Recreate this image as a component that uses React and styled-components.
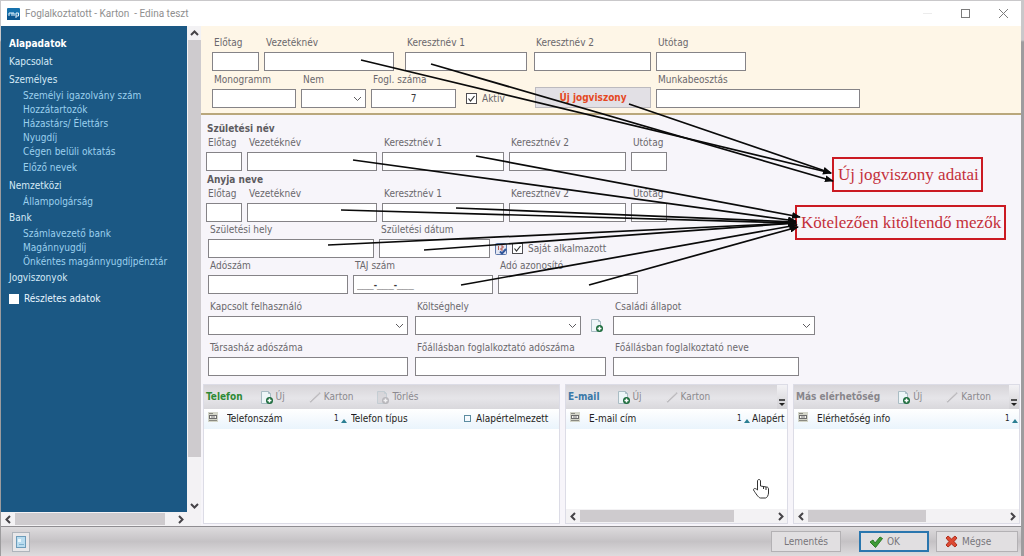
import React, { useId } from 'react'
import styled, { createGlobalStyle, css } from 'styled-components'

const GlobalStyle = createGlobalStyle`
    * {
        box-sizing: border-box;
    }
    body {
        margin: 0;
        font-family: 'DejaVu Sans Condensed', 'Noto Sans', sans-serif;
        font-size: 10px;
        line-height: 14px;
        color: #6a686c;
    }
    button, input, select {
        font: inherit;
        color: inherit;
        margin: 0;
    }
`

const Desktop = styled.div`
    position: relative;
    min-height: 100vh;
    display: flex;
    padding: 1px 3px 0 1px;
    background: linear-gradient(#c9c8ca 0, #c9c8ca 40px, #9d9c9e 42px, #9d9c9e 100%);
`
const Window = styled.div`
    flex: 1;
    min-width: 0;
    display: flex;
    flex-direction: column;
    background: #f7f5fa;
`

/* title bar */
const TitleBar = styled.header`
    display: flex;
    align-items: center;
    height: 25px;
    padding: 0 5px 0 6px;
    gap: 5px;
    background: #fff;
`
const Title = styled.h1`
    flex: 1;
    margin: 0;
    font-family: Roboto, 'Open Sans', sans-serif;
    font-size: 10px;
    font-weight: 400;
    color: #8f8f8f;
    white-space: pre;
`
const WindowButton = styled.button`
    width: 26px;
    height: 24px;
    margin-left: 7px;
    padding: 0;
    border: none;
    background: none;
    color: ${({ $faded }) => ($faded ? '#ececec' : '#7c7c7c')};
    svg {
        display: block;
        margin: auto;
    }
`

const Content = styled.div`
    flex: 1;
    display: flex;
    min-height: 0;
`

/* side navigation */
const Side = styled.aside`
    display: grid;
    grid-template-columns: 186px 14px;
    grid-template-rows: 1fr 14px;
    background: #f3f2f4;
`
const Nav = styled.nav`
    padding: 9px 8px 0;
    background: #1b5884;
    color: #d6ecfa;
    ul {
        list-style: none;
        margin: 0;
        padding: 0;
    }
    ul ul {
        padding-left: 14px;
    }
`
const NavLink = styled.a`
    display: block;
    line-height: 18px;
    color: ${({ $active }) => ($active ? '#fff' : '#d6eaf7')};
    font-weight: ${({ $active }) => ($active ? 700 : 400)};
    text-decoration: none;
    white-space: nowrap;
`
const SubLink = styled(NavLink)`
    line-height: 14px;
    padding: ${({ $apart }) => ($apart ? '2px 0' : 0)};
    color: #9bd0ee;
`
const DetailToggle = styled.label`
    display: flex;
    align-items: center;
    gap: 5px;
    margin-top: 5px;
    color: #e9f6ff;
    input {
        appearance: none;
        width: 10px;
        height: 10px;
        background: #fff;
    }
`

/* scroll bars */
const Bar = styled.div`
    display: flex;
    flex-direction: ${({ $vertical }) => ($vertical ? 'column' : 'row')};
    align-items: stretch;
    ${({ $vertical }) => ($vertical ? 'width: 14px; padding-left: 1px;' : 'height: 14px; padding: 1px 0;')}
    background: #f3f2f4;
`
const BarButton = styled.button`
    flex: 0 0 14px;
    display: flex;
    align-items: center;
    justify-content: center;
    padding: 0;
    border: none;
    background: none;
    color: #454347;
`
const BarTrack = styled.div`
    flex: 1;
    display: flex;
    flex-direction: ${({ $vertical }) => ($vertical ? 'column' : 'row')};
    &::before {
        content: '';
        flex: 0 0 ${({ $thumb }) => $thumb}%;
        background: #cecbce;
    }
`

/* form */
const Main = styled.main`
    flex: 1;
    min-width: 0;
    display: flex;
    flex-direction: column;
`
const TopForm = styled.section`
    display: flex;
    flex-direction: column;
    gap: 2px;
    padding: 10px 11px 5px;
    background: #fef6e7;
    border-bottom: 2px solid #b9a77c;
`
const Form = styled.section`
    display: flex;
    flex-direction: column;
    gap: ${({ $gap }) => $gap || 1}px;
    padding: ${({ $pad }) => $pad};
`
const SectionTitle = styled.h2`
    margin: 1px 0 -1px 1px;
    font-size: 10px;
    line-height: 14px;
    font-weight: 700;
    color: #5d5b60;
`
const Row = styled.div`
    display: flex;
    align-items: flex-end;
    gap: ${({ $gap }) => $gap || 5}px;
`
const FieldBox = styled.div`
    display: flex;
    flex-direction: column;
    gap: 2px;
    width: ${({ $w }) => $w}px;
    margin-right: ${({ $after }) => $after || 0}px;
    label {
        padding-left: 2px;
        white-space: nowrap;
    }
`
const control = css`
    width: 100%;
    height: 19px;
    padding: 0 3px;
    border: 1px solid #858387;
    border-radius: 0;
    background: #fff;
    color: #3c3a3e;
    outline: none;
`
const TextInput = styled.input`
    ${control}
    text-align: ${({ $center }) => ($center ? 'center' : 'left')};
    ${({ $mask }) => $mask && "font-family: 'Liberation Sans', sans-serif; font-weight: 700;"}
`
const SelectWrap = styled.div`
    display: grid;
    align-items: center;
    > * {
        grid-area: 1 / 1;
    }
    svg {
        justify-self: end;
        margin-right: 4px;
        pointer-events: none;
        color: #5d5b5f;
    }
`
const SelectInput = styled.select`
    ${control}
    appearance: none;
`
const CheckLabel = styled.label`
    display: flex;
    align-items: center;
    gap: 5px;
    height: 19px;
    width: ${({ $w }) => $w}px;
    white-space: nowrap;
`
const CheckBox = styled.span`
    display: grid;
    > * {
        grid-area: 1 / 1;
    }
    input {
        appearance: none;
        width: 11px;
        height: 11px;
        border: 1px solid #4f4d51;
        background: #fff;
    }
    svg {
        display: none;
        pointer-events: none;
    }
    input:checked + svg {
        display: block;
    }
`
const NewRelation = styled.button`
    width: 116px;
    height: 21px;
    border: 1px solid #bcbabf;
    background: #e2e0e5;
    color: #e5481f;
    font-weight: 700;
    padding: 0;
`
const IconButton = styled.button`
    display: flex;
    align-items: center;
    justify-content: center;
    width: ${({ $w }) => $w}px;
    height: 19px;
    padding: 0;
    border: none;
    background: none;
`

/* contact lists */
const Panels = styled.section`
    flex: 1;
    display: grid;
    grid-template-columns: 357fr 223fr 227fr;
    gap: 5px;
    margin-top: 8px;
    padding: 0 1px 2px 2px;
`
const Panel = styled.section`
    display: flex;
    flex-direction: column;
    min-width: 0;
    overflow: hidden;
    border: 1px solid #dcdce6;
    background: #fff;
`
const Toolbar = styled.div`
    position: relative;
    display: flex;
    align-items: center;
    height: 24px;
    padding-left: 2px;
    background: linear-gradient(#d7d5d9, #e6e5e9 55%, #d9d8dc);
`
const PanelTitle = styled.h3`
    margin: 0 17px 0 0;
    font-size: 10px;
    font-weight: 700;
    white-space: nowrap;
    color: ${({ $color }) => $color};
`
const ToolButton = styled.button`
    display: flex;
    align-items: center;
    gap: 2px;
    margin-right: 23px;
    padding: 0;
    border: none;
    background: none;
    color: #8b898e;
`
const More = styled.button`
    position: absolute;
    right: 0;
    bottom: 0;
    width: 10px;
    height: 24px;
    padding: 12px 0 0 2px;
    border: none;
    background: linear-gradient(#f3f2f5, #d2d1d5);
    color: #222;
    svg {
        display: block;
    }
`
const List = styled.table`
    width: 100%;
    table-layout: fixed;
    border-collapse: collapse;
    background: linear-gradient(#fff, #eaf4fc);
    color: #1f1e22;
    th {
        height: 20px;
        padding: 0;
        font-weight: 400;
        text-align: left;
        white-space: nowrap;
        overflow: hidden;
    }
`
const SortMark = styled.span`
    display: flex;
    align-items: center;
    gap: 2px;
    font-size: 8px;
    line-height: 12px;
    svg {
        margin-top: 3px;
    }
`
const BoxMark = styled.span`
    display: inline-block;
    width: 7px;
    height: 7px;
    margin-right: 5px;
    border: 1px solid #5c8ca0;
`
const PanelBody = styled.div`
    flex: 1;
`

/* bottom bar */
const Footer = styled.footer`
    display: flex;
    align-items: center;
    gap: 7px;
    height: 30px;
    padding: 0 3px 0 11px;
    border-top: 1px solid #8f8d91;
    background: linear-gradient(#dddbdd, #c5c2c5 50%, #dedcde);
`
const FooterButton = styled.button`
    display: flex;
    align-items: center;
    justify-content: ${({ $center }) => ($center ? 'center' : 'flex-start')};
    gap: 4px;
    width: ${({ $w }) => $w}px;
    height: 21px;
    padding: 0 8px;
    border: ${({ $primary }) => ($primary ? '2px solid #2a76ae' : '1px solid #b3b1b4')};
    background: #e1dfe1;
    color: #77757a;
`
const Spacer = styled.span`
    width: 4px;
`
const NoteButton = styled.button`
    display: flex;
    align-items: center;
    justify-content: center;
    width: 18px;
    height: 20px;
    margin-right: auto;
    padding: 0;
    border: 1px solid #aeb4bb;
    background: #e8e7e9;
`

/* annotations above the window */
const Overlay = styled.svg`
    position: absolute;
    left: 0;
    top: 0;
    pointer-events: none;
`
const Callout = styled.div`
    position: absolute;
    left: ${({ $x }) => $x}px;
    top: ${({ $y }) => $y}px;
    width: ${({ $w }) => $w}px;
    padding: 0 4px;
    border: 2px solid #cb1a22;
    font-family: 'Liberation Serif', serif;
    font-size: 17px;
    line-height: 31px;
    color: #c4303a;
    white-space: nowrap;
`

const Chevron = ({ dir = 'down', bold }) => {
    const points = {
        down: '1,3 4.5,6.5 8,3',
        up: '1,6 4.5,2.5 8,6',
        left: '6,1 2.5,4.5 6,8',
        right: '3,1 6.5,4.5 3,8',
    }
    return (
        <svg width="9" height="9" viewBox="0 0 9 9" fill="none" stroke="currentColor" strokeWidth={bold ? 2 : 1}>
            <polyline points={points[dir]} />
        </svg>
    )
}

const NewIcon = ({ faded }) => (
    <svg width="14" height="15" viewBox="0 0 14 15" opacity={faded ? 0.5 : 1}>
        <path d="M1.5 1.5h7l2 2v10h-9z" fill={faded ? '#cfced2' : '#eef6f8'} stroke="#a9bcc4" />
        <path d="M8.500 1.500v2h2" fill="none" stroke="#a9bcc4" />
        <circle cx="9.500" cy="10.500" r="3.500" fill={faded ? '#8d8c90' : '#1c6b3c'} />
        <path d="M9.500 8.500v4M7.500 10.500h4" stroke="#fff" strokeWidth="1.500" />
    </svg>
)

const PencilIcon = () => (
    <svg width="14" height="14" viewBox="0 0 14 14">
        <path d="M2 12L12 2.500" stroke="#bdbbbf" strokeWidth="2" />
        <path d="M1.500 11.500L11.500 2" stroke="#e9e8ea" strokeWidth="1" />
    </svg>
)

const CardIcon = () => (
    <svg width="10" height="10" viewBox="0 0 10 10">
        <rect x="0" y="0" width="10" height="10" fill="#d3d5c8" />
        <path d="M1 1.500h4M1 8.500h8" stroke="#8a8a82" />
        <rect x="1.500" y="3.500" width="7" height="3" fill="#f4f4ee" stroke="#6d6d6d" />
        <path d="M3 5h4" stroke="#777" />
    </svg>
)

const CalendarIcon = () => (
    <svg width="12" height="12" viewBox="0 0 12 12">
        <rect x="0.500" y="0.500" width="11" height="11" rx="1" fill="#e3e6f2" stroke="#5d77a9" />
        <path d="M3.500 3v4M6 3h2v2H6v2h2" fill="none" stroke="#b8574c" />
        <path d="M5 8.500l2 2 4-4.500" fill="none" stroke="#31569b" strokeWidth="2" />
    </svg>
)

const CheckMark = () => (
    <svg width="11" height="11" viewBox="0 0 11 11">
        <path d="M2.500 5.500l2 2.500 4-5" fill="none" stroke="#333" strokeWidth="1.200" />
    </svg>
)

const Check = ({ text, w }) => (
    <CheckLabel $w={w}>
        <CheckBox>
            <input type="checkbox" defaultChecked />
            <CheckMark />
        </CheckBox>
        {text}
    </CheckLabel>
)

const Field = ({ label, w, after, value, center, mask, select }) => {
    const id = useId()
    return (
        <FieldBox $w={w} $after={after}>
            <label htmlFor={id}>{label}</label>
            {select ? (
                <SelectWrap>
                    <SelectInput id={id} />
                    <Chevron />
                </SelectWrap>
            ) : (
                <TextInput id={id} defaultValue={value} $center={center} $mask={mask} />
            )}
        </FieldBox>
    )
}

const NameRow = () => (
    <Row>
        <Field label="Előtag" w={36} />
        <Field label="Vezetéknév" w={130} />
        <Field label="Keresztnév 1" w={122} />
        <Field label="Keresztnév 2" w={117} />
        <Field label="Utótag" w={36} />
    </Row>
)

const ScrollBar = ({ vertical, thumb }) => (
    <Bar $vertical={vertical}>
        <BarButton aria-label={vertical ? 'Fel' : 'Balra'}>
            <Chevron dir={vertical ? 'up' : 'left'} bold />
        </BarButton>
        <BarTrack $vertical={vertical} $thumb={thumb} />
        <BarButton aria-label={vertical ? 'Le' : 'Jobbra'}>
            <Chevron dir={vertical ? 'down' : 'right'} bold />
        </BarButton>
    </Bar>
)

const menu = [
    { text: 'Alapadatok', active: true },
    { text: 'Kapcsolat' },
    {
        text: 'Személyes',
        items: ['Személyi igazolvány szám', 'Hozzátartozók', 'Házastárs/ Élettárs', 'Nyugdíj', 'Cégen belüli oktatás', 'Előző nevek'],
    },
    { text: 'Nemzetközi', items: ['Állampolgárság'] },
    { text: 'Bank', items: ['Számlavezető bank', 'Magánnyugdíj', 'Önkéntes magánnyugdíjpénztár'] },
    { text: 'Jogviszonyok' },
]

const panels = [
    {
        title: 'Telefon',
        color: '#2f8a35',
        remove: true,
        columns: [
            { text: 'Telefonszám', w: 107 },
            { sort: true, w: 17 },
            { text: 'Telefon típus', w: 113 },
            { text: 'Alapértelmezett', box: true },
        ],
    },
    {
        title: 'E-mail',
        color: '#3a78a8',
        more: true,
        thumb: 80,
        columns: [
            { text: 'E-mail cím', w: 148 },
            { sort: true, w: 15 },
            { text: 'Alapért' },
        ],
    },
    {
        title: 'Más elérhetőség',
        color: '#88868b',
        more: true,
        thumb: 60,
        columns: [{ text: 'Elérhetőség info' }, { sort: true, w: 14 }],
    },
]

const arrows = [
    [361, 60, 831, 173],
    [431, 64, 833, 181],
    [629, 104, 831, 173],
    [353, 160, 796, 221],
    [476, 156, 800, 217],
    [341, 210, 796, 223],
    [456, 208, 796, 222],
    [328, 245, 796, 223],
    [424, 250, 796, 223],
    [461, 285, 797, 225],
    [589, 285, 798, 227],
]

const ContactPanel = ({ panel }) => (
    <Panel>
        <Toolbar>
            <PanelTitle $color={panel.color}>{panel.title}</PanelTitle>
            <ToolButton><NewIcon />Új</ToolButton>
            <ToolButton><PencilIcon />Karton</ToolButton>
            {panel.remove && <ToolButton><NewIcon faded />Törlés</ToolButton>}
            {panel.more && (
                <More aria-label="Továbbiak">
                    <svg width="6" height="8" viewBox="0 0 6 8">
                        <path d="M0 1h6" stroke="currentColor" strokeWidth="1.500" />
                        <path d="M0 4h6l-3 3z" fill="currentColor" />
                    </svg>
                </More>
            )}
        </Toolbar>
        <List>
            <colgroup>
                <col style={{ width: 23 }} />
                {panel.columns.map((col, i) => <col key={i} style={{ width: col.w }} />)}
            </colgroup>
            <thead>
                <tr>
                    <th style={{ paddingLeft: 4 }}><CardIcon /></th>
                    {panel.columns.map((col, i) => (
                        <th key={i}>
                            {col.sort && (
                                <SortMark>
                                    1
                                    <svg width="6" height="4" viewBox="0 0 6 4"><path d="M0 4l3-4 3 4z" fill="#2b7f93" /></svg>
                                </SortMark>
                            )}
                            {col.box && <BoxMark />}
                            {col.text}
                        </th>
                    ))}
                </tr>
            </thead>
        </List>
        <PanelBody />
        {panel.thumb && <ScrollBar thumb={panel.thumb} />}
    </Panel>
)

const Navigation = () => (
    <Side>
        <Nav>
            <ul>
                {menu.map((group) => (
                    <li key={group.text}>
                        <NavLink href="#" $active={group.active}>{group.text}</NavLink>
                        {group.items && (
                            <ul>
                                {group.items.map((item, i) => (
                                    <li key={item}><SubLink href="#" $apart={i === 5}>{item}</SubLink></li>
                                ))}
                            </ul>
                        )}
                    </li>
                ))}
            </ul>
            <DetailToggle>
                <input type="checkbox" />
                Részletes adatok
            </DetailToggle>
        </Nav>
        <ScrollBar vertical thumb={91} />
        <ScrollBar thumb={95} />
    </Side>
)

const App = () => {
    return (
        <Desktop>
            <GlobalStyle />
            <Window>
                <TitleBar>
                    <svg width="13" height="12" viewBox="0 0 13 12">
                        <rect width="13" height="12" rx="1" fill="#1671ac" />
                        <rect y="7" width="13" height="5" fill="#0d578f" />
                        <path d="M2 8V5M2 5h3v3M5 5h2v3M9 10V5h2.500v3H9" fill="none" stroke="#e6f4fc" />
                    </svg>
                    <Title>Foglalkoztatott - Karton  - Edina teszt</Title>
                    <WindowButton aria-label="Kis méret" $faded>
                        <svg width="9" height="9"><path d="M0 4.500h9" stroke="currentColor" /></svg>
                    </WindowButton>
                    <WindowButton aria-label="Teljes méret">
                        <svg width="9" height="9"><rect x="0.500" y="0.500" width="8" height="8" fill="none" stroke="currentColor" /></svg>
                    </WindowButton>
                    <WindowButton aria-label="Bezárás">
                        <svg width="9" height="9"><path d="M0 0l9 9M9 0L0 9" stroke="currentColor" /></svg>
                    </WindowButton>
                </TitleBar>

                <Content>
                    <Navigation />
                    <Main>
                        <TopForm>
                            <Row>
                                <Field label="Előtag" w={47} />
                                <Field label="Vezetéknév" w={130} after={6} />
                                <Field label="Keresztnév 1" w={122} after={2} />
                                <Field label="Keresztnév 2" w={117} />
                                <Field label="Utótag" w={90} />
                            </Row>
                            <Row>
                                <Field label="Monogramm" w={84} />
                                <Field label="Nem" w={65} select />
                                <Field label="Fogl. száma" w={85} value="7" center after={5} />
                                <Check text="Aktív" w={64} />
                                <NewRelation>Új jogviszony</NewRelation>
                                <Field label="Munkabeosztás" w={204} />
                            </Row>
                        </TopForm>

                        <Form $pad="6px 5px 0">
                            <SectionTitle>Születési név</SectionTitle>
                            <NameRow />
                            <SectionTitle>Anyja neve</SectionTitle>
                            <NameRow />
                        </Form>
                        <Form $pad="1px 7px 0">
                            <Row>
                                <Field label="Születési hely" w={166} />
                                <Field label="Születési dátum" w={111} />
                                <IconButton $w={12} aria-label="Naptár"><CalendarIcon /></IconButton>
                                <Check text="Saját alkalmazott" w={100} />
                            </Row>
                            <Row>
                                <Field label="Adószám" w={140} />
                                <Field label="TAJ szám" w={140} value="___-___-___" mask />
                                <Field label="Adó azonosító" w={140} />
                            </Row>
                        </Form>
                        <Form $pad="6px 7px 0" $gap={6}>
                            <Row $gap={7}>
                                <Field label="Kapcsolt felhasználó" w={200} select />
                                <Field label="Költséghely" w={166} select />
                                <IconButton $w={18} aria-label="Új költséghely"><NewIcon /></IconButton>
                                <Field label="Családi állapot" w={202} select />
                            </Row>
                            <Row $gap={7}>
                                <Field label="Társasház adószáma" w={200} />
                                <Field label="Főállásban foglalkoztató adószáma" w={191} />
                                <Field label="Főállásban foglalkoztató neve" w={186} />
                            </Row>
                        </Form>

                        <Panels>
                            {panels.map((panel) => <ContactPanel key={panel.title} panel={panel} />)}
                        </Panels>
                    </Main>
                </Content>

                <Footer>
                    <NoteButton aria-label="Jegyzet">
                        <svg width="10" height="12" viewBox="0 0 10 12">
                            <rect x="0.500" y="0.500" width="9" height="11" fill="#b9dcef" stroke="#6d9cba" />
                            <path d="M2 3h3v3H2z" fill="#e8f6fd" />
                            <path d="M3 8.500h5" stroke="#7fb2d0" />
                        </svg>
                    </NoteButton>
                    <FooterButton $w={70} $center>Lementés</FooterButton>
                    <Spacer />
                    <FooterButton $w={70} $primary>
                        <svg width="14" height="12" viewBox="0 0 14 12">
                            <path d="M1 6l3-2 2 3 5-6 2.500 1.500L6.500 11.500z" fill="#3f9b35" stroke="#2c7a28" />
                        </svg>
                        OK
                    </FooterButton>
                    <FooterButton $w={82}>
                        <svg width="13" height="13" viewBox="0 0 13 13">
                            <path d="M1 3l2-2 3.500 3L10 1l2 2-3 3.500 3 3.500-2 2-3.500-3L3 12l-2-2 3-3.500z" fill="#dd4a33" stroke="#b0301f" />
                        </svg>
                        Mégse
                    </FooterButton>
                </Footer>
            </Window>

            <Callout $x={832} $y={157} $w={151}>Új jogviszony adatai</Callout>
            <Callout $x={795} $y={205} $w={211}>Kötelezően kitöltendő mezők</Callout>
            <Overlay width="1024" height="556" viewBox="0 0 1024 556">
                <defs>
                    <marker id="head" markerWidth="9" markerHeight="7" refX="8" refY="3.5" orient="auto" markerUnits="userSpaceOnUse">
                        <path d="M0 0l9 3.500-9 3.500z" fill="#0a0a0a" />
                    </marker>
                </defs>
                {arrows.map(([x1, y1, x2, y2], i) => (
                    <line key={i} x1={x1} y1={y1} x2={x2} y2={y2} stroke="#0a0a0a" strokeWidth="1.700" markerEnd="url(#head)" />
                ))}
                <path
                    d="M757.500 490v-9c0-2 3-2 3 0v5l6 1c1.500 0 2 1 2 2v4c0 2-1.500 5-3 5h-5c-2 0-5-5-7-8 0-2 2-2 4 0zM763.500 486v3M766 487v3"
                    fill="#fff"
                    stroke="#333"
                />
            </Overlay>
        </Desktop>
    )
}

export default App
